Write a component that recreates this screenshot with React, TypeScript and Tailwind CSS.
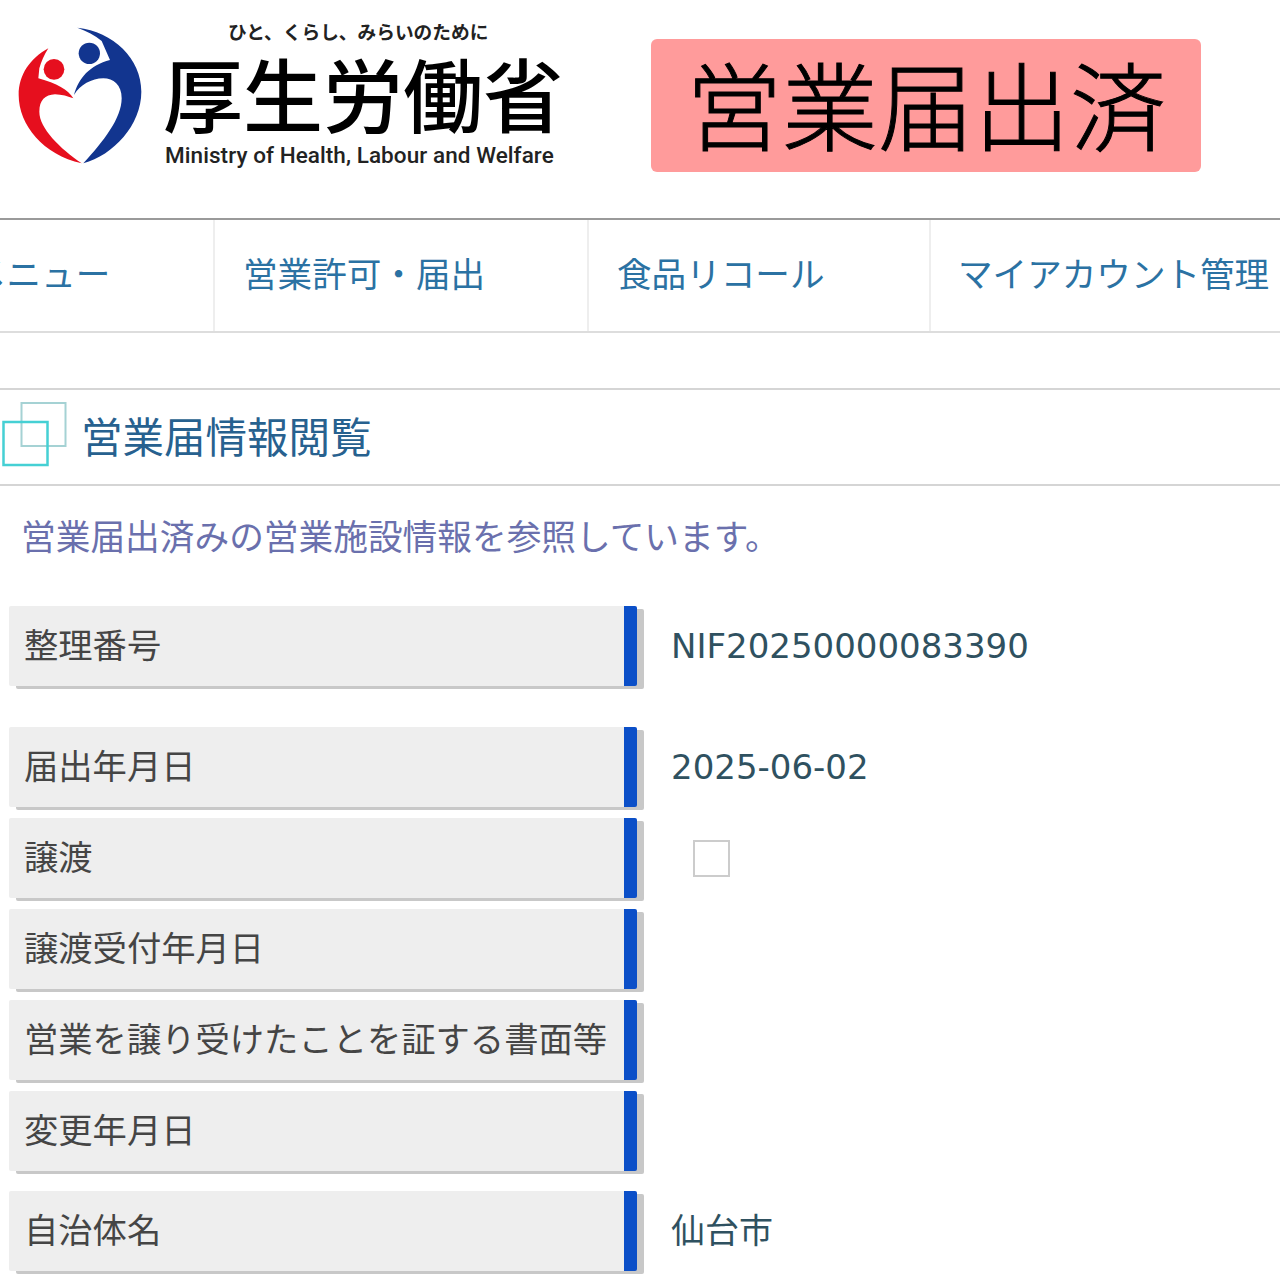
const cjk = "font-['Noto_Sans_CJK_JP','Noto_Sans',sans-serif]";

const rows = [
  { label: "整理番号", value: "NIF20250000083390", mt: "mt-0" },
  { label: "届出年月日", value: "2025-06-02", mt: "mt-[41px]" },
  { label: "譲渡", check: true, mt: "mt-[11px]" },
  { label: "譲渡受付年月日", mt: "mt-[11px]" },
  { label: "営業を譲り受けたことを証する書面等", mt: "mt-[11px]" },
  { label: "変更年月日", mt: "mt-[11px]" },
  { label: "自治体名", value: "仙台市", mt: "mt-[20px]" },
];

function MhlwMark() {
  return (
    <svg viewBox="0 0 480 480" className="mt-[15px] h-40 w-40 shrink-0">
      <path
        d="M232 38C340 50 424 130 424 230C424 330 340 420 250 445C310 380 365 310 365 250C365 210 340 190 310 190C275 190 240 210 222 240C235 190 270 150 330 135L305 78C285 60 260 48 232 38Z"
        fill="#12358f"
      />
      <circle cx="268" cy="115" r="32" fill="#12358f" />
      <path
        d="M145 100C90 130 56 180 56 240C56 330 130 420 245 445C180 400 118 340 118 290C118 255 135 240 165 238C185 238 205 245 220 250C205 225 170 205 115 190L118 160C124 140 132 120 145 100Z"
        fill="#e60f1e"
      />
      <circle cx="162" cy="163" r="31" fill="#e60f1e" />
    </svg>
  );
}

function SectionIcon() {
  return (
    <svg viewBox="0 0 70 66" className="h-[66px] w-[70px] shrink-0">
      <rect x="21.5" y="1" width="44" height="43" fill="none" stroke="#a5d2d4" strokeWidth="2" />
      <rect x="3.5" y="20" width="44" height="43" fill="none" stroke="#45d0d4" strokeWidth="2.5" />
    </svg>
  );
}

function Row({ label, value, check, mt }: { label: string; value?: string; check?: boolean; mt: string }) {
  return (
    <div className={`flex ${mt}`}>
      <div className="ml-[9px] flex h-[80px] w-[628px] shrink-0 items-center rounded-[2px] border-r-[13px] border-r-[#0b4fc8] bg-[#eeeeee] pb-[4px] pl-[15px] text-[34.3px] whitespace-nowrap text-[#454545] shadow-[7px_3px_0_#c8c8c8]">
        {label}
      </div>
      <div className="flex h-[80px] items-center pl-[34px] text-[34.3px] text-[#2f5160]">
        {check ? (
          <span className="ml-[22px] block h-[37px] w-[37px] border-[2px] border-[#cccccc] bg-white" />
        ) : (
          <span className="font-['DejaVu_Sans','Noto_Sans_CJK_JP',sans-serif] text-[34px]">{value}</span>
        )}
      </div>
    </div>
  );
}

export default function App() {
  return (
    <div className={`h-[1280px] w-[1280px] overflow-hidden bg-white ${cjk}`}>
      {/* Header */}
      <header className="flex h-[218px]">
        <MhlwMark />
        <div className="ml-[5px] w-[486px] shrink-0 text-black">
          <p className="mt-[18px] pl-[63px] text-[18.7px] leading-[26px] font-bold whitespace-nowrap text-[#222]">
            ひと、くらし、みらいのために
          </p>
          <p className="mt-[-3px] ml-[-2px] text-[80px] leading-[100px] font-medium whitespace-nowrap">厚生労働省</p>
          <p className="mt-[1px] font-['Roboto',sans-serif] text-[22.5px] leading-[26px] font-medium tracking-[0.07px] whitespace-nowrap text-[#222]">
            Ministry of Health, Labour and Welfare
          </p>
        </div>
        <div className="mt-[39px] flex h-[133px] w-[550px] shrink-0 items-center justify-center rounded-[6px] bg-[#ff9b9b] pb-[8px] text-[96px] font-light text-black [-webkit-text-stroke:1px_black]">
          営業届出済
        </div>
      </header>

      {/* Nav */}
      <nav className="flex h-[115px] border-t-[2px] border-b-[2px] border-t-[#9a9a9a] border-b-[#dddddd] text-[34.6px] whitespace-nowrap text-[#2b72a3]">
        <div className="flex w-[215px] shrink-0 items-center border-r-[2px] border-[#eeeeee] pb-[6px]">
          <span className="ml-[-28px]">メニュー</span>
        </div>
        <div className="flex w-[374px] shrink-0 items-center border-r-[2px] border-[#eeeeee] pb-[6px] pl-[28px]">営業許可・届出</div>
        <div className="flex w-[342px] shrink-0 items-center border-r-[2px] border-[#eeeeee] pb-[6px] pl-[28px]">食品リコール</div>
        <div className="flex items-center pb-[6px] pl-[27px]">マイアカウント管理</div>
      </nav>

      {/* Heading */}
      <div className="mt-[55px] flex h-[98px] items-center border-t-[2px] border-b-[2px] border-t-[#d5d5d5] border-b-[#d5d5d5] pb-[4px]">
        <SectionIcon />
        <h1 className="ml-[11px] text-[41.5px] font-normal whitespace-nowrap text-[#27618f]">営業届情報閲覧</h1>
      </div>

      <p className="mt-[24px] pl-[21px] text-[34.7px] leading-[50px] whitespace-nowrap text-[#6a70ad]">
        営業届出済みの営業施設情報を参照しています。
      </p>

      {/* Details */}
      <div className="mt-[46px]">
        {rows.map((r) => (
          <Row key={r.label} {...r} />
        ))}
      </div>
    </div>
  );
}
